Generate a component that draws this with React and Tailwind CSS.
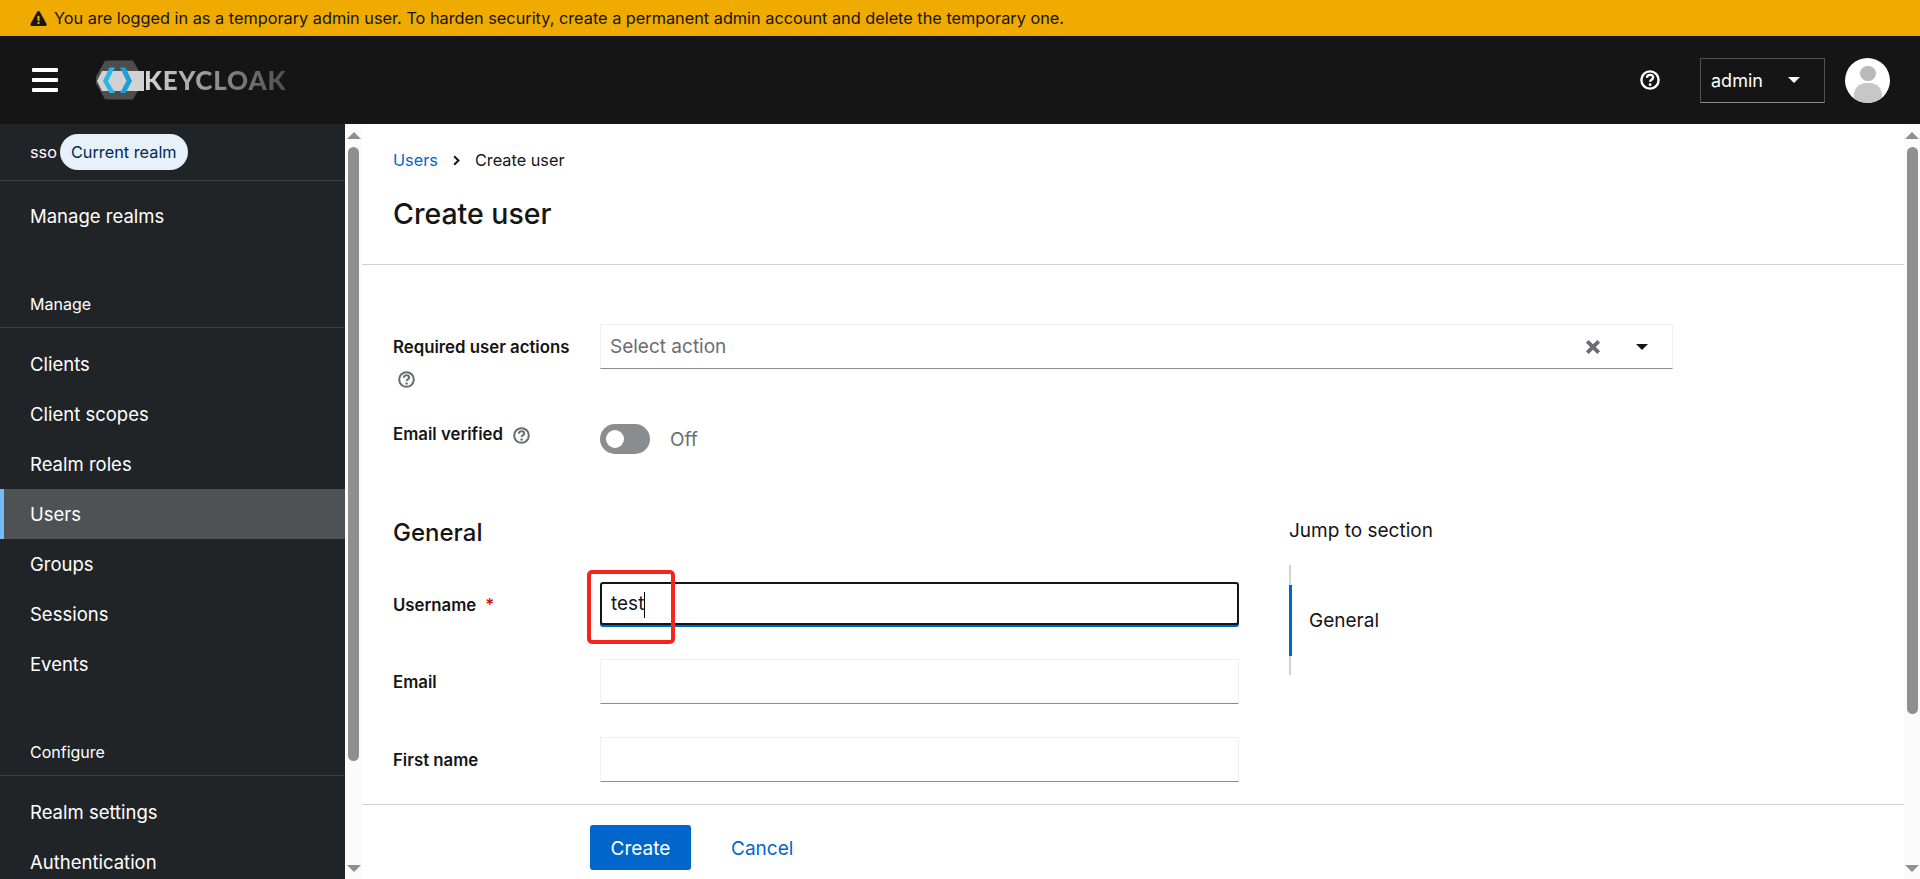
import { useState } from 'react';

const font = 'font-["Inter",sans-serif]';

function HelpIcon({ className }) {
  return (
    <svg viewBox="0 0 20 20" className={className} fill="none">
      <circle cx="10" cy="10" r="8.6" stroke="currentColor" strokeWidth="2.4" />
      <path d="M6.900 7.800c0-1.800 1.400-2.900 3.200-2.900 1.700 0 3 1.100 3 2.600 0 2.300-3 2.200-3 4.200" stroke="currentColor" strokeWidth="2.400" />
      <circle cx="10.100" cy="14.700" r="1.400" fill="currentColor" />
    </svg>
  );
}

function Logo() {
  return (
    <div className="flex items-center w-[190px] h-[40px]">
      <svg viewBox="0 0 48 40" className="w-[48px] h-[40px] shrink-0">
        <path d="M9 0.500h28l11 19.500-11 19.500H9L-2 20z" fill="#4d4d4d" />
        <path d="M6 11h42v20H6L1 21z" fill="#d2d2d2" />
        <path d="M13.500 7.500h5.500l-7 13.500 7 12h-5.500L7 21z" fill="#29b6e8" />
        <path d="M24 7.500h5.500l6.500 13.500-6.500 12H24l6.500-12z" fill="#1c9fd6" />
      </svg>
      <span className='text-[26px] leading-none font-black tracking-[0.8px] font-["Lato",sans-serif] bg-gradient-to-r from-[#d8d8d8] to-[#4f4f4f] bg-clip-text text-transparent'>
        KEYCLOAK
      </span>
    </div>
  );
}

function Scrollbar({ thumbHeight, className }) {
  return (
    <div className={`flex flex-col items-center shrink-0 bg-[#fbfbfb] ${className}`}>
      <div className="mt-[8px] w-0 h-0 border-x-[7px] border-x-transparent border-b-[7px] border-b-[#8f8f8f]" />
      <div className="mt-[8px] w-[11px] rounded-full bg-[#8f8f8f]" style={{ height: thumbHeight }} />
      <div className="mt-auto mb-[7px] w-0 h-0 border-x-[7px] border-x-transparent border-t-[7px] border-t-[#8f8f8f]" />
    </div>
  );
}

function NavItem({ label, active }) {
  return (
    <div
      className={`h-[50px] pt-[2px] flex items-center text-[18.500px] text-white ${
        active ? 'bg-[#4f5255] border-l-[4px] border-[#73bcf7] pl-[26px]' : 'pl-[30px]'
      }`}
    >
      {label}
    </div>
  );
}

function NavHeading({ label, className }) {
  return (
    <div className={`h-[47px] pl-[30px] flex items-center text-[16px] text-white border-b border-[#3c3f42] ${className}`}>
      {label}
    </div>
  );
}

function Sidebar() {
  return (
    <aside className="w-[345px] shrink-0 bg-[#212427] overflow-hidden">
      <div className="h-[57px] pl-[30px] flex items-center gap-[3px] border-b border-[#3c3f42] text-[16.300px] text-white">
        <span>sso</span>
        <span className="h-[36px] px-[11px] flex items-center rounded-full bg-[#e7f1fa] text-[#002952]">Current realm</span>
      </div>
      <div className="mt-[10px]">
        <NavItem label="Manage realms" />
      </div>
      <NavHeading label="Manage" className="mt-[40px]" />
      <div className="mt-[11px]">
        {['Clients', 'Client scopes', 'Realm roles'].map((l) => (
          <NavItem key={l} label={l} />
        ))}
        <NavItem label="Users" active />
        {['Groups', 'Sessions', 'Events'].map((l) => (
          <NavItem key={l} label={l} />
        ))}
      </div>
      <NavHeading label="Configure" className="mt-[40px]" />
      <div className="mt-[11px]">
        <NavItem label="Realm settings" />
        <NavItem label="Authentication" />
      </div>
    </aside>
  );
}

function TextField({ value, onChange, focused }) {
  return (
    <div className="relative w-[639px] h-[45px]">
      <input
        value={value}
        onChange={onChange}
        className={
          focused
            ? 'w-full h-[43px] pl-[9px] text-[19px] text-[#151515] bg-white border-2 border-[#151515] rounded-[3px] shadow-[0_2px_0_#0066cc] outline-none'
            : 'w-full h-full pl-[10px] text-[19px] text-[#151515] bg-white border border-[#f0f0f0] border-b-[#8a8d90] outline-none'
        }
      />
      {focused && <div className="absolute left-[44px] top-[10px] w-px h-[26px] bg-black" />}
    </div>
  );
}

function FormRow({ label, required, children, className }) {
  return (
    <div className={`flex items-center ${className}`}>
      <label className="w-[207px] shrink-0 pt-[2px] text-[16.800px] font-semibold text-[#151515]">
        {label}
        {required && <span className="ml-[9px] text-[#c9190b]">*</span>}
      </label>
      {children}
    </div>
  );
}

export default function App() {
  const [username, setUsername] = useState('test');

  return (
    <div className={`h-screen flex flex-col overflow-hidden bg-white ${font}`}>
      <div className="h-[36px] shrink-0 bg-[#f0ab00] flex items-center pl-[30px] gap-[7px] text-[16.300px] text-[#151515]">
        <svg viewBox="0 0 24 22" className="w-[17px] h-[15px]">
          <path d="M12 0c.8 0 1.500.4 1.900 1.100l9.800 17.600c.8 1.400-.2 3.300-1.900 3.300H2.200C.5 22-.5 20.100.3 18.700L10.100 1.100C10.500.4 11.200 0 12 0z" fill="#151515" />
          <rect x="10.500" y="7" width="3" height="7.500" fill="#f0ab00" />
          <rect x="10.500" y="16" width="3" height="3" fill="#f0ab00" />
        </svg>
        <span>You are logged in as a temporary admin user. To harden security, create a permanent admin account and delete the temporary one.</span>
      </div>

      <header className="h-[88px] shrink-0 bg-[#151515] flex items-center">
        <div className="ml-[32px] w-[26px] flex flex-col gap-[6px]">
          <div className="h-[4px] rounded-[1px] bg-white" />
          <div className="h-[4px] rounded-[1px] bg-white" />
          <div className="h-[4px] rounded-[1px] bg-white" />
        </div>
        <div className="ml-[38px]">
          <Logo />
        </div>
        <HelpIcon className="ml-auto w-[20px] h-[20px] text-white" />
        <div className="ml-[40px] w-[125px] h-[45px] flex items-center justify-between pl-[10px] pr-[24px] border border-[#4f5255] border-b-[#8a8d90] text-[18px] text-white">
          <span>admin</span>
          <div className="w-0 h-0 border-x-[6px] border-x-transparent border-t-[6px] border-t-white" />
        </div>
        <div className="ml-[20px] mr-[30px] w-[45px] h-[45px] rounded-full bg-white overflow-hidden flex flex-col items-center">
          <div className="mt-[8px] w-[16px] h-[16px] rounded-full bg-[#b8bbbe]" />
          <div className="mt-[2px] w-[28px] h-[20px] rounded-t-[12px] bg-[#c7c7c7]" />
        </div>
      </header>

      <div className="flex-1 flex min-h-0">
        <Sidebar />
        <Scrollbar thumbHeight={614} className="w-[17px]" />

        <div className="flex-1 flex flex-col min-w-0 relative">
          <main className="flex-1 min-h-0 overflow-hidden">
            <div className="h-[141px] pl-[31px] pt-[24px] border-b border-[#d2d2d2]">
              <nav className="flex items-center h-[24px] text-[16.300px]">
                <span className="text-[#0066cc]">Users</span>
                <svg viewBox="0 0 10 14" className="mx-[14px] w-[9px] h-[11px] text-[#151515]">
                  <path d="M2 1.500L7.500 7 2 12.500" fill="none" stroke="currentColor" strokeWidth="2.600" />
                </svg>
                <span className="text-[#151515]">Create user</span>
              </nav>
              <h1 className="mt-[22px] text-[28.500px] leading-[40px] font-medium text-[#151515]">Create user</h1>
            </div>

            <div className="pl-[31px] pt-[59px]">
              <div className="flex">
                <div className="w-[207px] shrink-0 text-[16.800px] font-semibold text-[#151515]">
                  <div className="h-[45px] pt-[2px] flex items-center">Required user actions</div>
                  <HelpIcon className="ml-[5px] mt-[2px] w-[17px] h-[17px] text-[#6a6e73]" />
                </div>
                <div className="w-[1073px] h-[45px] flex items-center border border-[#f0f0f0] border-b-[#8a8d90] pl-[9px] pt-[2px] text-[19px] text-[#6a6e73]">
                  <span>Select action</span>
                  <svg viewBox="0 0 14 14" className="ml-auto -mt-[2px] w-[16px] h-[16px] text-[#6a6e73]">
                    <path d="M2 2l10 10M12 2L2 12" stroke="currentColor" strokeWidth="3.400" />
                  </svg>
                  <div className="ml-[35px] mr-[24px] -mt-[2px] w-0 h-0 border-x-[6px] border-x-transparent border-t-[6px] border-t-[#151515]" />
                </div>
              </div>

              <div className="flex mt-[36px]">
                <div className="w-[207px] shrink-0 flex items-center gap-[10px] h-[22px] text-[16.800px] font-semibold text-[#151515]">
                  Email verified
                  <HelpIcon className="w-[17px] h-[17px] text-[#6a6e73]" />
                </div>
                <div className="w-[50px] h-[30px] rounded-full bg-[#8a8d90] flex items-center pl-[6px]">
                  <div className="w-[18px] h-[18px] rounded-full bg-white" />
                </div>
                <span className="ml-[20px] text-[19px] leading-[32px] text-[#6a6e73]">Off</span>
              </div>

              <div className="flex mt-[59px]">
                <section className="w-[846px] shrink-0">
                  <h2 className="text-[24px] leading-[36px] font-medium text-[#151515]">General</h2>
                  <FormRow label="Username" required className="mt-[31px]">
                    <TextField value={username} onChange={(e) => setUsername(e.target.value)} focused />
                  </FormRow>
                  <FormRow label="Email" className="mt-[32px]">
                    <TextField value="" onChange={() => {}} />
                  </FormRow>
                  <FormRow label="First name" className="mt-[33px]">
                    <TextField value="" onChange={() => {}} />
                  </FormRow>
                </section>
                <aside className="ml-[50px]">
                  <div className="mt-[4px] text-[19px] leading-[24px] text-[#151515]">Jump to section</div>
                  <div className="mt-[22px] h-[110px] pt-[2px] border-l-[2px] border-[#d2d2d2] relative flex items-center">
                    <div className="absolute -left-[2px] top-[20px] h-[71px] w-[3px] bg-[#0066cc]" />
                    <span className="pl-[18px] text-[19px] text-[#151515]">General</span>
                  </div>
                </aside>
              </div>
            </div>
          </main>

          <footer className="h-[75px] shrink-0 border-t border-[#d2d2d2] bg-white flex items-start pt-[20px] pl-[228px]">
            <button className="w-[101px] h-[45px] pt-[3px] rounded-[3px] bg-[#0066cc] text-white text-[19px]">Create</button>
            <button className="ml-[40px] h-[45px] pt-[3px] text-[19px] text-[#0066cc]">Cancel</button>
          </footer>

          {/* annotation drawn over the username field */}
          <div className="absolute left-[225px] top-[446px] w-[88px] h-[74px] rounded-[5px] border-[4px] border-[#f5241c] pointer-events-none" />
        </div>

        <Scrollbar thumbHeight={567} className="w-[16px]" />
      </div>
    </div>
  );
}
